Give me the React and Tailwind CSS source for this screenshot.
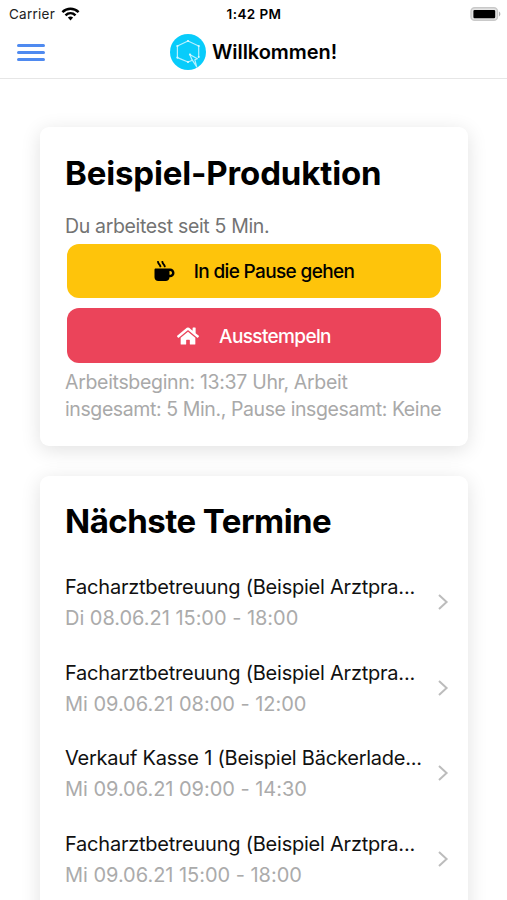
import { FaHome, FaMugHot } from "react-icons/fa";

const appointments = [
  { title: "Facharztbetreuung (Beispiel Arztpra...", time: "Di 08.06.21 15:00 - 18:00" },
  { title: "Facharztbetreuung (Beispiel Arztpra...", time: "Mi 09.06.21 08:00 - 12:00" },
  { title: "Verkauf Kasse 1 (Beispiel Bäckerlade...", time: "Mi 09.06.21 09:00 - 14:30" },
  { title: "Facharztbetreuung (Beispiel Arztpra...", time: "Mi 09.06.21 15:00 - 18:00" },
];

const WifiIcon = () => (
  <svg className="ml-[6px] h-[14px] w-[19px]" viewBox="0 0 18 14" fill="none" stroke="#000" strokeWidth="2.5">
    <path d="M.9 5.1C5.6.6 12.4.6 17.1 5.1" />
    <path d="M4 8.4c2.9-2.8 7.1-2.8 10 0" />
    <path d="M6.4 10.5c1.5-1.4 3.7-1.4 5.2 0L9 13.4z" fill="#000" stroke="none" />
  </svg>
);

const BatteryIcon = () => (
  <svg className="h-[14px] w-[32px]" viewBox="0 0 32 14">
    <rect x="1" y=".7" width="26.5" height="12.6" rx="3.6" fill="#e4e4e4" stroke="#c9c9c9" strokeWidth="1.4" />
    <rect x="3.4" y="2.9" width="21.8" height="8.4" rx="1.2" fill="#000" />
    <path d="M29 4.6c1.8.7 1.8 4.1 0 4.8z" fill="#b0b0b0" />
  </svg>
);

const Logo = () => (
  <svg className="h-[36px] w-[36px]" viewBox="0 0 36 36">
    <circle cx="18" cy="18" r="18" fill="#08ccfb" />
    <g fill="none" stroke="#b5f0ff" strokeWidth="1.2" strokeLinejoin="round">
      <path d="M22.5 26.3 18 28 7.4 23.6V12L18 7l10.7 5v11" />
      <path d="m19.8 20.4 7.6 4.3-2.6 1 1.9 7.1-4.7-7.1z" />
    </g>
    <g fill="#d9f8ff">
      <circle cx="18" cy="7" r="1.1" />
      <circle cx="28.7" cy="12" r="1.1" />
      <circle cx="28.7" cy="23" r="1" />
      <circle cx="18" cy="28" r="1.1" />
      <circle cx="7.4" cy="23.6" r="1.1" />
      <circle cx="7.4" cy="12" r="1.1" />
      <circle cx="20" cy="20.5" r="1.1" />
    </g>
  </svg>
);

const Chevron = () => (
  <svg className="h-[18px] w-[12px] shrink-0" viewBox="0 0 12 18" fill="none" stroke="#bcbcbc" strokeWidth="2">
    <path d="M2 2l7.6 7L2 16" />
  </svg>
);

const Card = ({ className, children }) => (
  <section className={`rounded-[9px] bg-white px-[25px] shadow-[0_4px_20px_rgba(0,0,0,0.12)] ${className}`}>
    {children}
  </section>
);

const App = () => {
  return (
    <div className="flex h-[900px] w-[507px] flex-col overflow-hidden bg-white font-['Inter',sans-serif] text-black">
      <div className="grid h-[27px] shrink-0 grid-cols-3 items-center pl-[9px] pr-[5px] text-[13.5px]">
        <div className="flex items-center text-[#222]">
          <span className="pt-px tracking-[0.25px]">Carrier</span>
          <WifiIcon />
        </div>
        <div className="pr-[3px] pt-px text-center text-[13.5px] font-semibold tracking-[0.4px]">1:42 PM</div>
        <div className="flex justify-end">
          <BatteryIcon />
        </div>
      </div>

      <header className="grid h-[52px] shrink-0 grid-cols-[1fr_auto_1fr] items-center border-b border-[#e6e6e6] px-[17px]">
        <button type="button" aria-label="Menü" className="flex w-[28px] flex-col gap-[4.5px]">
          <span className="h-[2.7px] rounded-full bg-[#4f8af0]" />
          <span className="h-[2.7px] rounded-full bg-[#4f8af0]" />
          <span className="h-[2.7px] rounded-full bg-[#4f8af0]" />
        </button>
        <div className="flex items-center gap-[6px] pb-px">
          <Logo />
          <h1 className="whitespace-nowrap pb-px text-[20px] font-semibold tracking-[-0.05px]">Willkommen!</h1>
        </div>
      </header>

      <main className="flex flex-col gap-[30px] pl-[40px] pr-[39px] pt-[48px]">
        <Card className="h-[319px] pt-[26px]">
          <h2 className="whitespace-nowrap text-[33px] font-bold leading-[40px] tracking-[-0.15px]">Beispiel-Produktion</h2>
          <p className="mt-[20px] text-[19.5px] leading-[27px] tracking-[-0.34px] text-[#737373]">Du arbeitest seit 5 Min.</p>
          <div className="mx-[2px] mt-[4px] flex flex-col gap-[10px] text-[19px] font-medium tracking-[-0.64px]">
            <button type="button" className="flex h-[54px] items-center justify-center gap-[19px] rounded-[12px] bg-[#fec40b]">
              <FaMugHot className="h-[20px] w-[21px]" />
              <span className="pt-[2px]">In die Pause gehen</span>
            </button>
            <button type="button" className="flex h-[55px] items-center justify-center gap-[20px] rounded-[12px] bg-[#eb445a] text-white">
              <FaHome className="h-[22px] w-[22px]" />
              <span className="pt-[3px]">Ausstempeln</span>
            </button>
          </div>
          <p className="mt-[6px] whitespace-nowrap text-[19.5px] leading-[27px] text-[#a9a9a9]">
            <span className="tracking-[-0.32px]">Arbeitsbeginn: 13:37 Uhr, Arbeit</span>
            <br />
            <span className="tracking-[-0.4px]">insgesamt: 5 Min., Pause insgesamt: Keine</span>
          </p>
        </Card>

        <Card className="h-[480px] pt-[25px]">
          <h2 className="whitespace-nowrap text-[33px] font-bold leading-[40px] tracking-[-0.52px]">Nächste Termine</h2>
          <ul className="mt-[31px]">
            {appointments.map((item, index) => (
              <li key={index} className="flex h-[85.5px] items-start justify-between">
                <div className="whitespace-nowrap text-[20px]">
                  <div className="leading-[30px] tracking-[-0.23px] text-[#111]">{item.title}</div>
                  <div className="leading-[32px] tracking-[-0.03px] text-[#ababab]">{item.time}</div>
                </div>
                <div className="-mr-[6px] mt-[21px] flex">
                  <Chevron />
                </div>
              </li>
            ))}
          </ul>
        </Card>
      </main>
    </div>
  );
};

export default App;
